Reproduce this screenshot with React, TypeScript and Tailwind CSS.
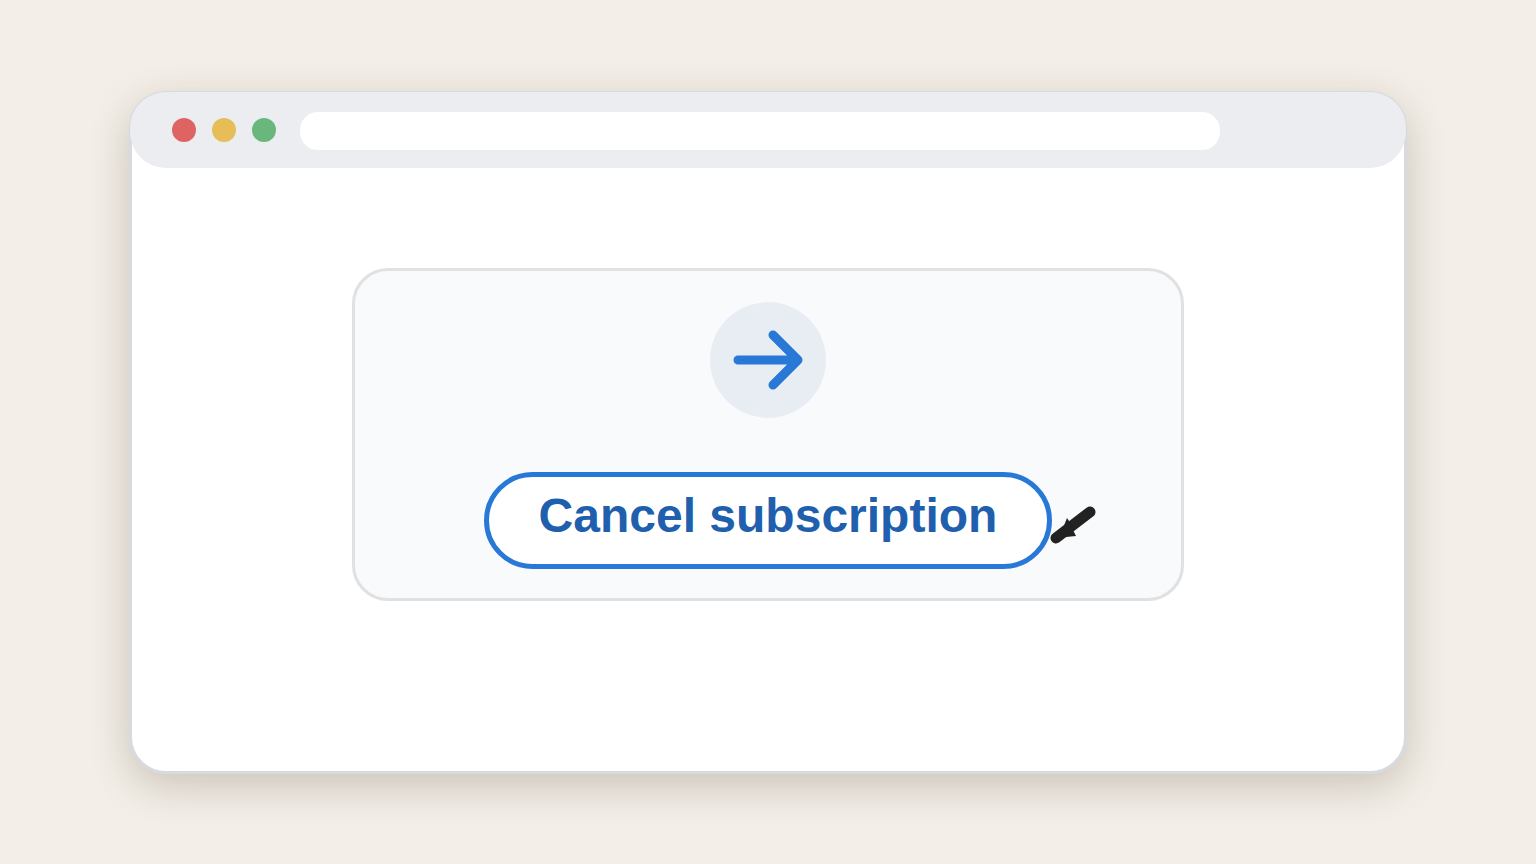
const dots = ["bg-[#de6464]", "bg-[#e7bd58]", "bg-[#69b77c]"];

function ArrowBadge() {
  return (
    <div className="flex size-[116px] items-center justify-center rounded-full bg-[#e8edf4]">
      <svg width="116" height="116" viewBox="0 0 116 116" fill="none" stroke="#2878d8" strokeWidth="9" strokeLinecap="round" strokeLinejoin="round" aria-hidden="true">
        <path d="M28 58H88M63 33L88 58L63 83" />
      </svg>
    </div>
  );
}

function Pointer() {
  return (
    <svg width="48" height="36" viewBox="0 0 48 36" className="absolute top-[35px] left-full overflow-visible" aria-hidden="true">
      <path d="M38 5L4 31" stroke="#222" strokeWidth="11" strokeLinecap="round" />
      <path d="M15 11L11 21L4 31L24 29L21 23L17 14Z" fill="#222" />
    </svg>
  );
}

export default function App() {
  return (
    <div className="flex min-h-screen bg-[#f3eee7] px-[129px] pt-[91px] pb-[90px] font-['Liberation_Sans',Arial,sans-serif]">
      <main className="flex-1 rounded-[37px] border-3 border-[#d8dadf] bg-white shadow-[0_12px_40px_rgba(40,32,0,0.2)]">
        {/* title bar sits over the window border */}
        <header className="-mx-0.5 -mt-0.5 flex h-[76px] items-center gap-6 rounded-[36px] bg-[#ebedf1] pr-[186px] pl-[42px]">
          <div className="flex gap-4">
            {dots.map((color) => (
              <span key={color} className={`size-6 rounded-full ${color}`} />
            ))}
          </div>
          <input type="text" aria-label="Address" className="mt-0.5 h-[38px] min-w-0 flex-1 rounded-[18px] bg-white px-4 text-base outline-none" />
        </header>

        <section className="mx-auto mt-[100px] flex w-full max-w-[832px] flex-col items-center gap-[54px] rounded-[36px] border-3 border-[#e0e1e3] bg-[#f9fafc] pt-[31px] pb-[29px]">
          <ArrowBadge />
          <div className="relative">
            <button type="button" className="cursor-pointer rounded-full border-5 border-[#2878d8] bg-white px-[50px] pt-[15px] pb-6 text-[48px] leading-none font-bold whitespace-nowrap text-[#205fae]">
              Cancel subscription
            </button>
            <Pointer />
          </div>
        </section>
      </main>
    </div>
  );
}
